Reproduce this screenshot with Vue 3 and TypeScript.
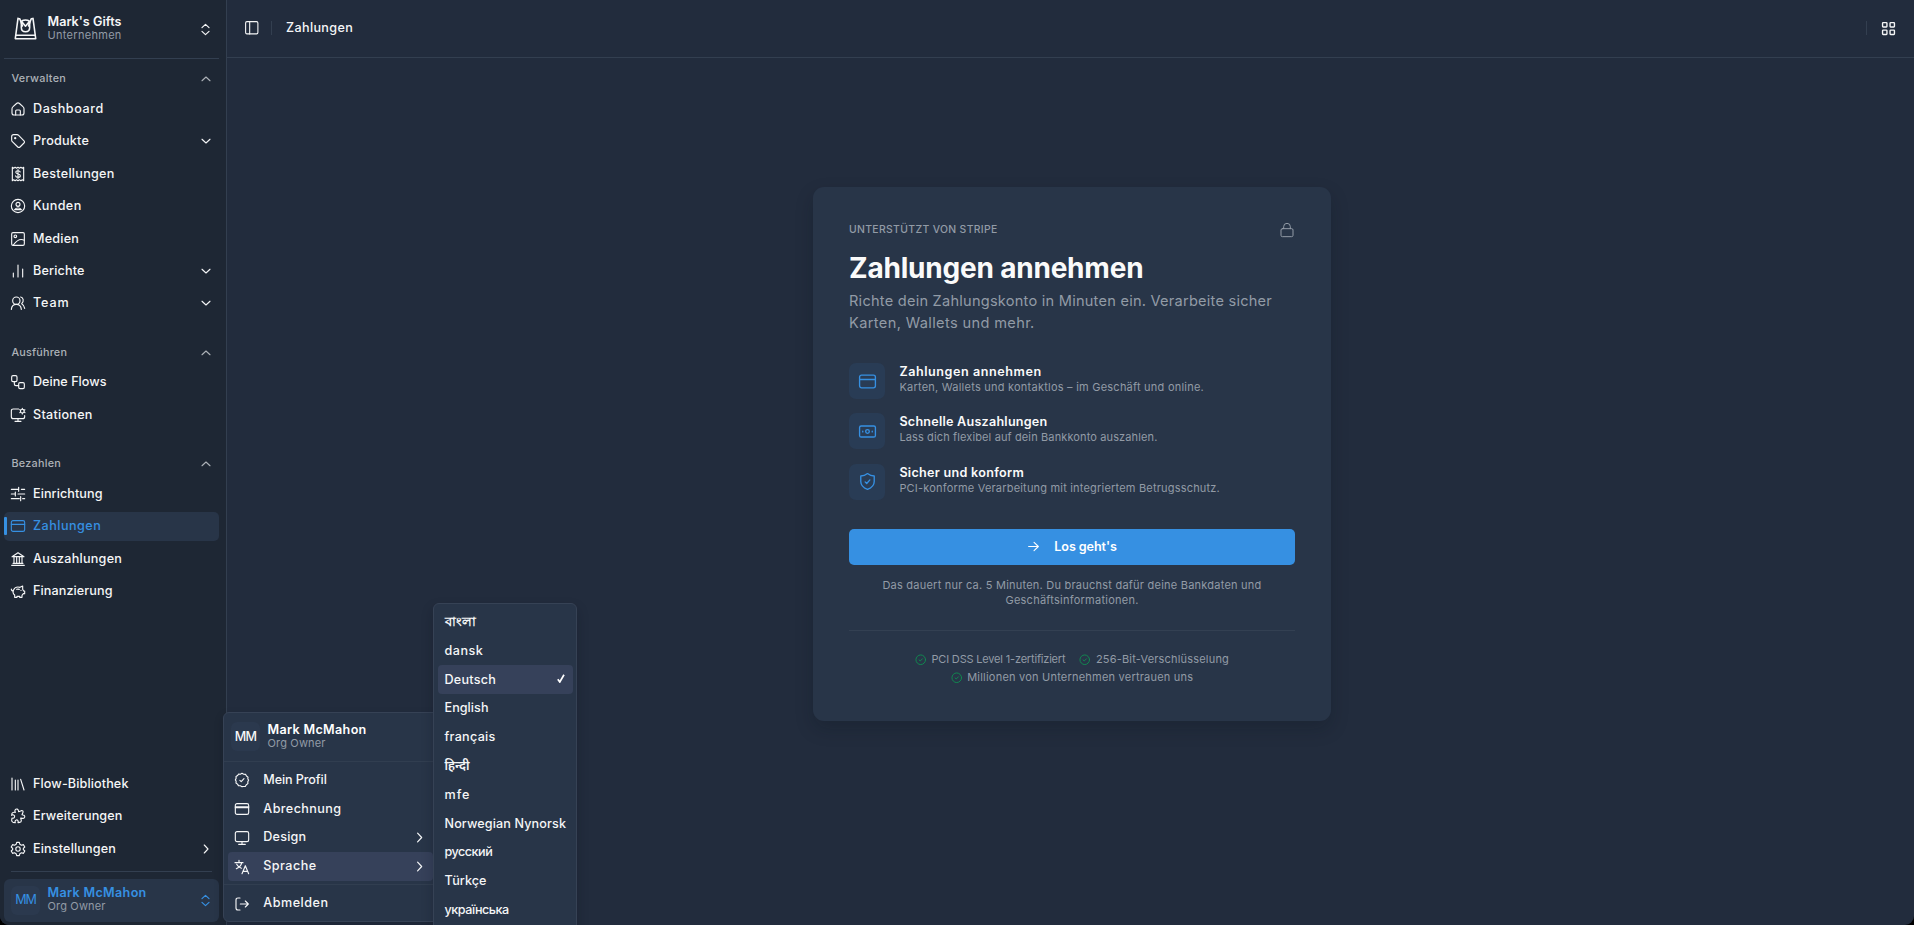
<script setup lang="ts">
import { defineComponent, h, type Directive } from 'vue'

interface Item { label: string; w: number; icon?: string; chev?: string; active?: boolean }
interface Group { label: string; w: number; items: Item[] }

const icons: Record<string, string> = {
  home: '<path d="M3 11.500c0-1.400.5-2.200 1.600-3.100l4.800-4.300c1.500-1.400 3.700-1.400 5.200 0l4.800 4.300c1.100.9 1.600 1.700 1.600 3.100V18c0 2-1 3-3 3H6c-2 0-3-1-3-3z"/><path d="M8.500 21v-6c0-1 .5-1.500 1.500-1.500h4c1 0 1.500.5 1.500 1.500v6"/>',
  tag: '<path d="M2.500 5.500c0-2 1-3 3-3h5c1 0 1.800.3 2.500 1l8 8.200c1 1 1 2.300 0 3.300l-6 6c-1 1-2.300 1-3.300 0L3.500 13c-.7-.7-1-1.500-1-2.500z"/><circle cx="7.800" cy="7.800" r=".9"/>',
  receipt: '<path d="M3.500 2v20l2-1.300L7.700 22l2.100-1.300L12 22l2.200-1.300 2.100 1.300 2.200-1.300 2 1.300V2l-2 1.300L16.300 2l-2.100 1.300L12 2 9.800 3.300 7.700 2 5.500 3.300z"/><path d="M15.300 9c-.4-1.200-1.600-1.800-3.300-1.800-1.900 0-3.300.8-3.300 2.300 0 3.500 6.800 1.500 6.800 5 0 1.500-1.600 2.400-3.500 2.400s-3.300-.8-3.600-2.200M12 5.500v13"/>',
  user: '<circle cx="12" cy="12" r="10"/><circle cx="12" cy="9.500" r="3"/><path d="M7 17.500c2.200-3.300 7.800-3.300 10 0z"/>',
  image: '<rect x="2.500" y="2.500" width="19" height="19" rx="2"/><circle cx="8" cy="8" r="2"/><path d="M5 21c4-5.500 9-11 16.500-7"/>',
  bars: '<path d="M5 21v-6M12 21V3M19 21V9"/>',
  team: '<circle cx="9.500" cy="8.500" r="5.500"/><path d="M2 21.500c.5-5 3.500-7.500 7.500-7.500s7 2.500 7.500 7.500"/><path d="M16 3c4 1 5.500 6.500 1.500 10 2.500 1.500 4 3.500 4.500 7"/>',
  flows: '<rect x="2.500" y="2.500" width="8" height="9" rx="2"/><rect x="13" y="13" width="8.500" height="9" rx="2"/><path d="M6.500 11.500V15c0 1.700.8 2.500 2.500 2.500h4"/>',
  station: '<path d="M13 3H5C3 3 2 4 2 6v8.500c0 2 1 3 3 3h14c2 0 3-1 3-3V13M12 17.500v4M7.500 21.500h9"/><circle cx="18.500" cy="6.200" r="2.800"/><path d="M18.500 2v1.200M18.500 9.200v1.300M14.700 4l1.200.8M21.200 7.700l1.200.7M14.700 8.400l1.200-.8M21.200 4.800l1.200-.7"/>',
  sliders: '<path d="M2 5h11M13 2v6M17 5h5M2 12h5M8 9v6M12 12h10M2 19h12M16 16v6M19 19h3"/>',
  card: '<rect x="2" y="4" width="20" height="16" rx="2.500"/><path d="M2 9.500h20"/>',
  bank: '<path d="M3 8.500 12 2.500l9 6zM2.500 21.500h19M4.500 18.500h15M6 9v9M10 9v9M14 9v9M18 9v9"/>',
  pig: '<path d="M19 9.500c.7.800 1.100 1.500 1.400 2.500H22v4h-2l-2 2.500v3h-3.500V20h-4v1.500H7V18c-2.500-2-3-5-1.500-8C7 7 11 5.500 15 6.500l4-2zM5 12c-2 0-3-1-3-3M10 9.500c1.300-.4 2.500-.4 4 0M16.500 11v.3"/>',
  library: '<path d="M3 3v18M8 6v15M12 6v15M16 5l5 16"/>',
  puzzle: '<path d="M8 6.500C5.500 2 11-.5 12.500 3.500l.5 2 4-1.500c2-.5 3 .5 2.500 2.500L18 10l1.500.5c4.500.5 2.500 6-1 5L16 15l1 4c0 1.500-1 2.300-2.500 2.500L12 22c1-3-1-4.500-2.500-4S7 20 8 22l-3.500-.5C3 21 2.500 20 2.500 18.500L3 15c3.500 1.500 5.500-3 2.500-4.500-1-.5-2-.5-3 .5L3 8c.5-1.500 2-2 5-1.500z"/>',
  gear: '<circle cx="12" cy="12" r="3.300"/><path d="M10 2h4l.8 3 2.400 1.400 3-.9 2 3.500-2.200 2v2l2.200 2-2 3.500-3-.9-2.400 1.400-.8 3h-4l-.8-3-2.400-1.400-3 .9-2-3.500L4 13v-2L1.800 9l2-3.500 3 .9L9.200 5z"/>',
  badge: '<path d="m12 2 2.500 1.300 2.800.2 1.400 2.500 2.300 1.700-.3 2.800 1.300 1.500-1.300 2.700.1 2.800-2.300 1.700-1.500 2.300-2.700.2L12 22l-2.500-1.300-2.800-.2-1.400-2.300L3 16.500l.2-2.800L2 12l1.200-2.500L3 6.800l2.400-1.500 1.500-2.100 2.600.1z"/><path d="m8.800 12.500 2 2 4.200-4.500"/>',
  bill: '<rect x="2" y="4" width="20" height="16" rx="2.500"/><path d="M2 8.800h20M2 10h20"/>',
  screen: '<rect x="2" y="2.500" width="20" height="15" rx="2.500"/><path d="M12 17.500v4M7 21.500h10"/>',
  lang: '<path d="M1.500 5.500h12M7.500 2v3M3.500 14.500C8 12.500 11 9.500 11.500 5.500M4 8c1.500 3 4 5 7 6M12 22l5-12 5 12M13.500 18.500h7"/>',
  logout: '<path d="M9 3H6C4 3 3 4 3 6v12c0 2 1 3 3 3h3M9.500 12H21M17 7.500l4.500 4.500-4.500 4.500"/>',
  panel: '<rect x="2.500" y="2.500" width="19" height="19" rx="2"/><path d="M8.800 2.500v19"/>',
  grid: '<rect x="2.500" y="2.500" width="7" height="7" rx="1"/><rect x="14.500" y="2.500" width="7" height="7" rx="1"/><rect x="2.500" y="14.500" width="7" height="7" rx="1"/><rect x="14.500" y="14.500" width="7" height="7" rx="1"/>',
  up: '<path d="m4 15.500 8-7.500 8 7.500"/>',
  down: '<path d="m4 8.500 8 7.500 8-7.500"/>',
  right: '<path d="m8.500 4 7.500 8-7.500 8"/>',
  updown: '<path d="m5.500 8.500 6.500-6 6.500 6M5.500 15.500l6.500 6 6.500-6"/>',
  lock: '<rect x="3" y="10" width="18" height="12" rx="2"/><path d="M7 10V7a5 5 0 0 1 10 0v3"/>',
  cash: '<rect x="2" y="5" width="20" height="14" rx="2"/><circle cx="12" cy="12" r="2.300"/><path d="M6 11.500v1M18 11.500v1"/>',
  shield: '<path d="M12 2c2.500 2 5 3 8.500 3v7c0 5-3.500 8-8.500 10-5-2-8.500-5-8.500-10V5C7 5 9.500 4 12 2z"/><path d="m9 12.500 2 2 4-4.500"/>',
  arrow: '<path d="M3 12h18M13 4.500l8 7.500-8 7.500"/>',
  ok: '<circle cx="12" cy="12" r="10"/><path d="m8.500 12.500 2.500 2 4.500-4.500"/>',
  bag: '<path d="M4.800 2.300 2.200 21.800h19.600L19.200 2.300l-1.700.4-2.600 6.800M4.800 2.300l1.700.4 2.600 6.800M2.600 18.500h18.800"/><path d="M8 6c0-3 8-3 8 0v5c0 5.600-8 5.600-8 0zM8.500 5.500 12 9.800l3.500-4.300"/>',
}

const Icon = defineComponent({
  props: { name: { type: String, required: true } },
  setup: (p) => () => h('svg', { class: 'icon', viewBox: '0 0 24 24', innerHTML: icons[p.name] }),
})

/* Tracks a label out (or in) so that it spans the given advance width. */
const vFit: Directive<HTMLElement, number> = {
  mounted(el, { value }) {
    if (!value) return
    const n = [...(el.textContent ?? '').trim()].length
    const base = el.getBoundingClientRect().width
    el.style.letterSpacing = `${((value - base) / (n - 0.5)).toFixed(3)}px`
  },
}

const groups: Group[] = [
  { label: 'Verwalten', w: 54.5, items: [
    { label: 'Dashboard', w: 70.5, icon: 'home' },
    { label: 'Produkte', w: 56, icon: 'tag', chev: 'down' },
    { label: 'Bestellungen', w: 81.5, icon: 'receipt' },
    { label: 'Kunden', w: 48.5, icon: 'user' },
    { label: 'Medien', w: 46, icon: 'image' },
    { label: 'Berichte', w: 51.5, icon: 'bars', chev: 'down' },
    { label: 'Team', w: 36, icon: 'team', chev: 'down' },
  ] },
  { label: 'Ausführen', w: 55.5, items: [
    { label: 'Deine Flows', w: 73.5, icon: 'flows' },
    { label: 'Stationen', w: 59.5, icon: 'station' },
  ] },
  { label: 'Bezahlen', w: 49.5, items: [
    { label: 'Einrichtung', w: 69.5, icon: 'sliders' },
    { label: 'Zahlungen', w: 68, icon: 'card', active: true },
    { label: 'Auszahlungen', w: 89, icon: 'bank' },
    { label: 'Finanzierung', w: 79.5, icon: 'pig' },
  ] },
]
const footer: Item[] = [
  { label: 'Flow-Bibliothek', w: 95.5, icon: 'library' },
  { label: 'Erweiterungen', w: 89.5, icon: 'puzzle' },
  { label: 'Einstellungen', w: 83, icon: 'gear', chev: 'right' },
]
const menu: Item[] = [
  { label: 'Mein Profil', w: 63.5, icon: 'badge' },
  { label: 'Abrechnung', w: 78, icon: 'bill' },
  { label: 'Design', w: 43, icon: 'screen', chev: 'right' },
  { label: 'Sprache', w: 53, icon: 'lang', chev: 'right', active: true },
]
const languages: Item[] = [
  { label: 'বাংলা', w: 0 },
  { label: 'dansk', w: 38.5 },
  { label: 'Deutsch', w: 51.5, active: true },
  { label: 'English', w: 44 },
  { label: 'français', w: 51 },
  { label: 'हिन्दी', w: 0 },
  { label: 'mfe', w: 25.5 },
  { label: 'Norwegian Nynorsk', w: 121.5 },
  { label: 'русский', w: 48 },
  { label: 'Türkçe', w: 42 },
  { label: 'українська', w: 64.5 },
]
const features = [
  { icon: 'card', title: 'Zahlungen annehmen', tw: 142, text: 'Karten, Wallets und kontaktlos – im Geschäft und online.', w: 304.5 },
  { icon: 'cash', title: 'Schnelle Auszahlungen', tw: 148, text: 'Lass dich flexibel auf dein Bankkonto auszahlen.', w: 258 },
  { icon: 'shield', title: 'Sicher und konform', tw: 124.5, text: 'PCI-konforme Verarbeitung mit integriertem Betrugsschutz.', w: 320.5 },
]
const trust = [
  { text: 'PCI DSS Level 1-zertifiziert', w: 134 },
  { text: '256-Bit-Verschlüsselung', w: 133 },
  { text: 'Millionen von Unternehmen vertrauen uns', w: 226 },
]
</script>

<template>
  <div class="window">
    <aside class="sidebar">
      <div class="org">
        <Icon name="bag" class="logo" />
        <div class="who">
          <b v-fit="74">Mark's Gifts</b>
          <small v-fit="74">Unternehmen</small>
        </div>
        <Icon name="updown" class="chev" />
      </div>
      <section v-for="g in groups" :key="g.label" class="group">
        <h3><span v-fit="g.w">{{ g.label }}</span><Icon name="up" class="chev" /></h3>
        <nav>
          <a v-for="i in g.items" :key="i.label" class="nav-item" :class="{ active: i.active }">
            <Icon :name="i.icon!" /><span v-fit="i.w">{{ i.label }}</span>
            <Icon v-if="i.chev" :name="i.chev" class="chev" />
          </a>
        </nav>
      </section>
      <nav class="bottom">
        <a v-for="i in footer" :key="i.label" class="nav-item">
          <Icon :name="i.icon!" /><span v-fit="i.w">{{ i.label }}</span>
          <Icon v-if="i.chev" :name="i.chev" class="chev" />
        </a>
      </nav>
      <div class="account">
        <div class="avatar"><span v-fit="21">MM</span></div>
        <div class="who"><b v-fit="99">Mark McMahon</b><small v-fit="58">Org Owner</small></div>
        <Icon name="updown" class="chev" />
      </div>
    </aside>

    <main>
      <header>
        <Icon name="panel" class="panel" />
        <i class="sep" />
        <span v-fit="67" class="crumb">Zahlungen</span>
        <i class="sep end" />
        <Icon name="grid" class="apps" />
      </header>
      <div class="stage">
        <article class="card">
          <div class="eyebrow"><span v-fit="148.5">UNTERSTÜTZT VON STRIPE</span><Icon name="lock" /></div>
          <h1><span v-fit="294.5">Zahlungen annehmen</span></h1>
          <p class="lead">
            <span v-fit="423">Richte dein Zahlungskonto in Minuten ein. Verarbeite sicher</span>
            <span v-fit="185.5">Karten, Wallets und mehr.</span>
          </p>
          <ul class="features">
            <li v-for="f in features" :key="f.title">
              <div class="tile"><Icon :name="f.icon" /></div>
              <div class="copy"><b v-fit="f.tw">{{ f.title }}</b><small v-fit="f.w">{{ f.text }}</small></div>
            </li>
          </ul>
          <button><Icon name="arrow" /><span v-fit="62.5">Los geht's</span></button>
          <p class="note">
            <span v-fit="379">Das dauert nur ca. 5 Minuten. Du brauchst dafür deine Bankdaten und</span>
            <span v-fit="133">Geschäftsinformationen.</span>
          </p>
          <div class="trust">
            <div v-for="t in trust" :key="t.text"><Icon name="ok" /><span v-fit="t.w">{{ t.text }}</span></div>
          </div>
        </article>
      </div>
    </main>

    <div class="menu">
      <div class="menu-head">
        <div class="avatar"><span v-fit="22">MM</span></div>
        <div class="who"><b v-fit="99">Mark McMahon</b><small v-fit="58">Org Owner</small></div>
      </div>
      <div class="menu-list">
        <a v-for="i in menu" :key="i.label" :class="{ active: i.active }">
          <Icon :name="i.icon!" /><span v-fit="i.w">{{ i.label }}</span>
          <Icon v-if="i.chev" :name="i.chev" class="chev" />
        </a>
      </div>
      <div class="menu-list last">
        <a><Icon name="logout" /><span v-fit="65">Abmelden</span></a>
      </div>
    </div>

    <div class="langs">
      <a v-for="l in languages" :key="l.label" :class="{ active: l.active }">
        <span v-fit="l.w" :class="{ script: !l.w }">{{ l.label }}</span>
        <svg v-if="l.active" class="tick" viewBox="0 0 8 9"><path d="M.8 5.200 2.800 8 7 .8" /></svg>
      </a>
    </div>
  </div>
</template>

<style>
body { background: #000; overflow: hidden; }
</style>

<style scoped>
.window {
  position: relative; display: flex; width: 100vw; height: 925px; overflow: hidden;
  background: #222c3d; border-radius: 0 0 9px 9px; color: #f5f6f7;
  font: 500 12.600px/18px Inter, "Noto Sans", "Liberation Sans", sans-serif;
}
.window * { box-sizing: border-box; }
span, b, small { white-space: nowrap; }
b { font-weight: 600; }
small { font-size: 11px; font-weight: 400; color: #929ba6; }
:deep(.icon) { width: 16px; height: 16px; flex: none; fill: none; stroke: currentColor; stroke-width: 1.700; stroke-linecap: round; stroke-linejoin: round; }
.icon.chev { width: 12px; height: 12px; margin-left: auto; stroke-width: 2.200; }

.sidebar { width: 227px; flex: none; display: flex; flex-direction: column; padding: 0 7px 3.500px 4px; background: #1e2734; border-right: 1px solid #333f50; }
.org { display: flex; align-items: center; height: 59px; padding: 0 7px 2px 9px; border-bottom: 1px solid #333f50; margin-bottom: 5.600px; }
.icon.logo { width: 25px; height: 25px; stroke-width: 1.500; }
.who { display: flex; flex-direction: column; align-items: flex-start; }
.who b { line-height: 14px; }
.who small { line-height: 13px; }
.org .who { margin-left: 9.500px; }
.org .chev, .account .chev { width: 13px; height: 13px; position: relative; top: 1px; }
.account .chev { top: 0; }
.group { margin-bottom: 20.300px; }
h3 { display: flex; align-items: center; height: 28.800px; margin: 0 0 1.200px; padding: 1px 7.500px 0 7.500px; font-size: 10.800px; font-weight: 500; color: #adb2b8; }
nav { display: flex; flex-direction: column; gap: 3.600px; }
.nav-item { position: relative; display: flex; align-items: center; gap: 7px; height: 28.800px; padding: 0 7.500px 0 6px; border-radius: 5px; }
.nav-item.active { background: #283548; color: #3690e2; }
.nav-item.active::before { content: ""; position: absolute; left: 0; top: 5px; width: 3px; height: 18px; background: #3690e2; border-radius: 1px; }
.bottom { margin: auto 0 0; }
.bottom::after { content: ""; height: 1px; margin: 4px 7px 7.500px; background: #333f50; }
.account { display: flex; align-items: center; height: 42.500px; padding: 0 7px; border-radius: 6px; background: #283548; color: #3690e2; }
.avatar { display: grid; place-items: center; width: 29px; height: 29px; border-radius: 6px; background: #2b394e; font-size: 12.600px; }
.account .avatar { font-weight: 400; }
.account .who { margin: -1px 0 0 7.500px; }

main { flex: 1; display: flex; flex-direction: column; }
header { display: flex; align-items: center; height: 58px; padding: 1px 18px 2px 16.500px; border-bottom: 1px solid #333f50; }
.icon.panel { width: 15.500px; height: 15.500px; }
.crumb { margin-top: -1px; }
.sep { width: 1px; height: 14px; background: #333f50; margin: 0 14px 0 12px; }
.sep.end { margin: 0 14.500px 0 auto; }
.icon.apps { width: 15px; height: 15px; stroke-width: 2.200; }
.stage { flex: 1; display: flex; justify-content: center; align-items: flex-start; padding: 129px 0 0 3px; }
.card { width: 518px; height: 534px; flex: none; padding: 34px 36px 0; border-radius: 11px; background: #283548; box-shadow: 0 8px 18px rgba(10, 16, 28, .22); }
.eyebrow { display: flex; justify-content: space-between; align-items: center; height: 18px; font-size: 10.400px; color: #929ba6; }
.eyebrow :deep(.icon) { stroke-width: 1.500; }
h1 { margin: 10px 0 0; height: 38px; font-size: 28px; font-weight: 700; line-height: 38px; color: #fafafa; }
.lead { display: flex; flex-direction: column; align-items: flex-start; margin: 2.500px 0 0; font-size: 14.600px; font-weight: 400; line-height: 22px; color: #929ba6; }
.features { list-style: none; margin: 29.500px 0 0; padding: 0; display: flex; flex-direction: column; gap: 14.400px; }
.features li { display: flex; }
.tile { display: grid; place-items: center; width: 36px; height: 36px; border-radius: 7px; background: #293c55; color: #3690e2; }
.tile :deep(.icon) { width: 19px; height: 19px; stroke-width: 1.700; }
.copy { display: flex; flex-direction: column; align-items: flex-start; margin-left: 14.400px; }
.copy b { line-height: 17px; color: #fafafa; }
.copy small { line-height: 15.500px; }
button { display: flex; align-items: center; justify-content: center; gap: 14px; width: 100%; height: 36px; margin: 29px 0 0; padding: 0; border: 0; border-radius: 5px; background: #3690e2; color: #fff; font: inherit; font-weight: 600; }
button :deep(.icon) { width: 13px; height: 13px; stroke-width: 2; }
.note { display: flex; flex-direction: column; align-items: center; margin: 13px 0 0; height: 52px; font-size: 11px; font-weight: 400; line-height: 15px; color: #929ba6; }
.trust { display: flex; flex-wrap: wrap; justify-content: center; gap: 0 14px; padding-top: 19px; border-top: 1px solid #334052; font-size: 11px; font-weight: 400; color: #929ba6; }
.trust div { display: flex; align-items: center; gap: 5px; height: 18px; }
.trust :deep(.icon) { width: 11.500px; height: 11.500px; color: #118a50; stroke-width: 2; position: relative; top: 1px; }

.menu { position: absolute; left: 223px; top: 712px; width: 222px; height: 210px; border: 1px solid #364255; border-radius: 6px; background: #283548; box-shadow: 0 4px 10px rgba(10, 16, 28, .2); }
.menu-head { display: flex; align-items: center; height: 49px; padding: 0 0 1px 7px; border-bottom: 1px solid #313e50; }
.menu .who { margin-left: 7.500px; color: #fff; }
.menu-list { padding: 4px 11px 3px 4px; border-bottom: 1px solid #313e50; }
.menu-list.last { border: 0; }
.menu-list a { display: flex; align-items: center; height: 28.800px; padding: 0 7px 0 6px; border-radius: 4px; }
.menu-list span { margin: -1px 0 0 13.300px; }
.menu-list .chev { width: 13px; height: 13px; }
.menu-list .active, .langs .active { background: #36415a; }
.langs { position: absolute; left: 433px; top: 603px; width: 144px; height: 340px; padding: 3.600px 3px 0 4px; border: 1px solid #364255; border-radius: 6px; background: #283548; box-shadow: 0 6px 12px rgba(10, 16, 28, .25); }
.langs a { display: flex; align-items: center; justify-content: space-between; height: 28.800px; padding: 0 8px 0 6.500px; border-radius: 4px; }
.script { font-weight: 600; }
.tick { width: 8px; height: 9px; margin-top: -3px; fill: none; stroke: #fff; stroke-width: 1.700; }
</style>
